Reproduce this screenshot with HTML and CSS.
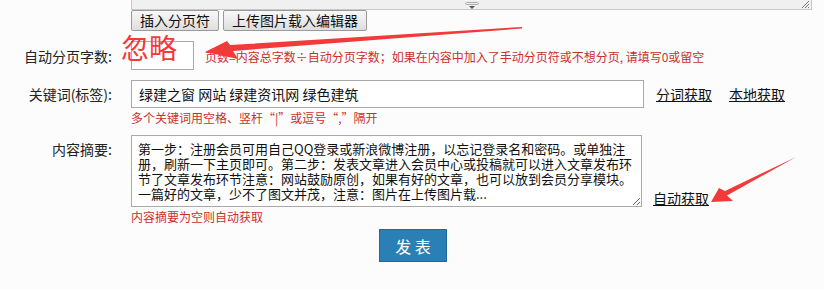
FILE: index.html
```html
<!DOCTYPE html>
<html lang="zh-CN">
<head>
  <meta charset="UTF-8" />
  <title>发表文章</title>
  <link rel="stylesheet" href="styles.css">
</head>
<body>

  <div class="form">
    <div class="editor-foot">
      <span class="drag-bar"></span>
      <svg class="grip" width="8" height="8" viewBox="0 0 8 8">
        <path d="M1 8 L8 1 M4 8 L8 4 M7 8 L8 7" stroke="#777" stroke-width="1" />
      </svg>
    </div>

    <div class="tool-buttons">
      <button type="button" class="btn-tool">插入分页符</button>
      <button type="button" class="btn-tool">上传图片载入编辑器</button>
    </div>

    <div class="row row-pages">
      <label class="label">自动分页字数:</label>
      <input type="text" class="input-pages" />
      <span class="hint hint-inline">页数=内容总字数÷自动分页字数；如果在内容中加入了手动分页符或不想分页, 请填写0或留空</span>
    </div>

    <div class="row row-keywords">
      <label class="label">关键词(标签):</label>
      <input type="text" class="input-keywords" value="绿建之窗 网站 绿建资讯网 绿色建筑" />
      <a href="#" class="link">分词获取</a>
      <a href="#" class="link">本地获取</a>
    </div>
    <div class="hint hint-below">多个关键词用空格、竖杆“|”或逗号“,”隔开</div>

    <div class="row row-summary">
      <label class="label">内容摘要:</label>
      <textarea class="input-summary" wrap="off">第一步：注册会员可用自己QQ登录或新浪微博注册，以忘记登录名和密码。或单独注
册，刷新一下主页即可。第二步：发表文章进入会员中心或投稿就可以进入文章发布环
节了文章发布环节注意：网站鼓励原创，如果有好的文章，也可以放到会员分享模块。
一篇好的文章，少不了图文并茂，注意：图片在上传图片载...</textarea>
      <a href="#" class="link link-auto">自动获取</a>
    </div>
    <div class="hint hint-below">内容摘要为空则自动获取</div>

    <div class="submit-row">
      <button type="submit" class="btn-submit">发 表</button>
    </div>
  </div>

  <!-- annotations drawn on top of the screenshot -->
  <div class="note-ignore">忽略</div>
  <svg class="arrows" width="824" height="289" viewBox="0 0 824 289">
    <polygon fill="#f23a3a" points="205,52 227,41 230,45 522,27 522,28.5 233,51 238,59" />
    <polygon fill="#f23a3a" points="711,202 719,188 725,191 796,157 727,195.5 733,201" />
  </svg>

</body>
</html>
```

FILE: styles.css
```css
* {
  box-sizing: border-box;
}

body {
  margin: 0;
  background-color: #fcfcfc;
  font-family: "Noto Sans CJK SC", "Liberation Sans", sans-serif;
  font-size: 14px;
  color: #222;
  position: relative;
  height: 289px;
  overflow: hidden;
}

.editor-foot {
  margin-left: 131px;
  width: 681px;
  height: 10px;
  background-color: #f0f0f0;
  border: 1px solid #c8c8c8;
  border-top: none;
  position: relative;
}

.drag-bar {
  position: absolute;
  left: 333px;
  top: 2px;
  width: 14px;
  height: 3px;
  border: 1px solid #aaa;
  border-radius: 2px;
}

.drag-bar::after {
  content: "";
  position: absolute;
  left: 3px;
  top: 3px;
  border-left: 3px solid transparent;
  border-right: 3px solid transparent;
  border-top: 3px solid #555;
}

.grip {
  position: absolute;
  right: 2px;
  top: 0;
}

.tool-buttons {
  margin-left: 131px;
  display: flex;
  gap: 4px;
}

.btn-tool {
  height: 21px;
  padding: 0 8px;
  font-family: inherit;
  font-size: 14px;
  line-height: 19px;
  color: #111;
  background: linear-gradient(#f8f8f8, #dedede);
  border: 1px solid #9a9a9a;
  border-radius: 2px;
}

.row {
  display: flex;
  align-items: center;
}

.label {
  width: 131px;
  flex-shrink: 0;
  text-align: right;
  padding-right: 19px;
  color: #222;
}

input[type="text"], textarea {
  border: 1px solid #a9a9a9;
  background-color: #fff;
  font-family: inherit;
  color: #111;
}

.row-pages {
  margin-top: 10px;
}

.input-pages {
  width: 63px;
  height: 29px;
}

.hint {
  color: #c9302c;
  font-size: 12px;
}

.hint-inline {
  margin-left: 11px;
  margin-top: 2px;
}

.row-keywords {
  margin-top: 10px;
}

.input-keywords {
  width: 513px;
  height: 28px;
  padding: 0 7px;
  font-size: 14px;
}

.link {
  color: #111;
  text-decoration: underline;
  margin-left: 12px;
}

.link + .link {
  margin-left: 17px;
}

.hint-below {
  margin-left: 131px;
  height: 19px;
  line-height: 19px;
}

.row-summary {
  margin-top: 8px;
  align-items: flex-start;
}

.row-summary .label {
  padding-top: 4px;
}

.input-summary {
  width: 511px;
  height: 72px;
  padding: 5px 6px;
  font-size: 13px;
  line-height: 15px;
  resize: vertical;
  overflow: hidden;
}

.link-auto {
  align-self: flex-end;
  margin-left: 11px;
  line-height: 17px;
}

.submit-row {
  margin-top: 3px;
  padding-left: 379px;
}

.btn-submit {
  width: 68px;
  height: 33px;
  background-color: #2a7fb4;
  border: 1px solid #22699a;
  color: #fff;
  font-family: inherit;
  font-size: 16px;
}

.note-ignore {
  position: absolute;
  left: 121px;
  top: 33px;
  font-size: 28px;
  line-height: 28px;
  color: #f23a3a;
}

.arrows {
  position: absolute;
  left: 0;
  top: 0;
  pointer-events: none;
}
```
